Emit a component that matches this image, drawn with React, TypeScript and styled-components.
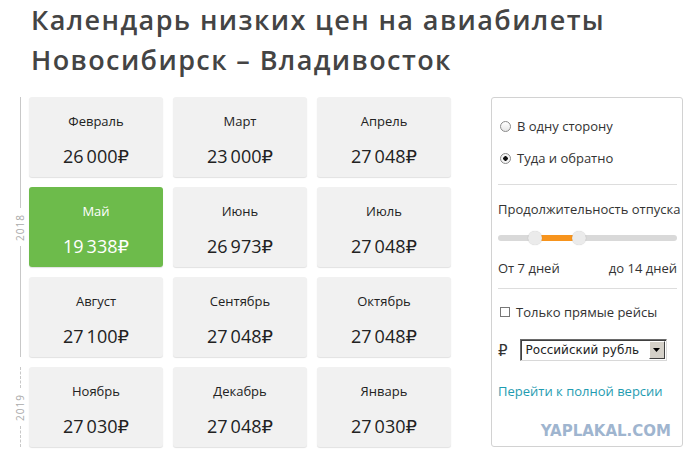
import { FC } from "react";
import styled, { createGlobalStyle } from "styled-components";

type Month = { name: string; price: string; best?: boolean };

const years: { year: string; dashed?: boolean; months: Month[] }[] = [
  {
    year: "2018",
    months: [
      { name: "Февраль", price: "26\u2009000₽" },
      { name: "Март", price: "23\u2009000₽" },
      { name: "Апрель", price: "27\u2009048₽" },
      { name: "Май", price: "19\u2009338₽", best: true },
      { name: "Июнь", price: "26\u2009973₽" },
      { name: "Июль", price: "27\u2009048₽" },
      { name: "Август", price: "27\u2009100₽" },
      { name: "Сентябрь", price: "27\u2009048₽" },
      { name: "Октябрь", price: "27\u2009048₽" },
    ],
  },
  {
    year: "2019",
    dashed: true,
    months: [
      { name: "Ноябрь", price: "27\u2009030₽" },
      { name: "Декабрь", price: "27\u2009048₽" },
      { name: "Январь", price: "27\u2009030₽" },
    ],
  },
];

const App: FC = () => {
  return (
    <Page>
      <GlobalStyle />
      <Title>
        Календарь низких цен на авиабилеты
        <br />
        Новосибирск – Владивосток
      </Title>
      <Main>
        <Calendar>
          {years.map((y) => (
            <YearGroup key={y.year}>
              <Rail>
                <RailLine $dashed={y.dashed} />
                <YearLabel>{y.year}</YearLabel>
                <RailLine $dashed={y.dashed} />
              </Rail>
              <Grid>
                {y.months.map((m) => (
                  <Card key={m.name} $best={m.best}>
                    <MonthName>{m.name}</MonthName>
                    <Price>{m.price}</Price>
                  </Card>
                ))}
              </Grid>
            </YearGroup>
          ))}
        </Calendar>

        <Panel>
          <Options>
            <Option>
              <Radio />
              В одну сторону
            </Option>
            <Option>
              <Radio $checked />
              Туда и обратно
            </Option>
          </Options>
          <Divider />
          <DurationLabel>Продолжительность отпуска</DurationLabel>
          <Slider>
            <Track>
              <Fill style={{ left: 37, width: 44 }} />
              <Thumb style={{ left: 30 }} />
              <Thumb style={{ left: 74 }} />
            </Track>
          </Slider>
          <RangeLabels>
            <span>От 7 дней</span>
            <span>до 14 дней</span>
          </RangeLabels>
          <Divider />
          <CheckRow>
            <Checkbox />
            Только прямые рейсы
          </CheckRow>
          <CurrencyRow>
            <Ruble>₽</Ruble>
            <SelectBox>
              <SelectText>Российский рубль</SelectText>
              <SelectArrow>
                <svg width="7" height="4" viewBox="0 0 7 4">
                  <path d="M0 0h7L3.5 4z" fill="#000" />
                </svg>
              </SelectArrow>
            </SelectBox>
          </CurrencyRow>
          <FullLink href="#">Перейти к полной версии</FullLink>
          <Watermark>YAPLAKAL.COM</Watermark>
        </Panel>
      </Main>
    </Page>
  );
};

export default App;

const GlobalStyle = createGlobalStyle`
  body {
    margin: 0;
    background: #fff;
    font-family: "Open Sans", "DejaVu Sans", sans-serif;
    color: #333;
  }
`;

const Page = styled.div`
  width: 700px;
  height: 460px;
  overflow: hidden;
  padding-left: 14px;
  box-sizing: border-box;
`;

const Title = styled.h1`
  margin: 0 0 17px 17px;
  font-size: 27px;
  font-weight: 600;
  letter-spacing: 1.4px;
  line-height: 40px;
  color: #444;
  white-space: nowrap;
`;

const Main = styled.div`
  display: flex;
  align-items: flex-start;
  gap: 40px;
`;

const Calendar = styled.div`
  display: flex;
  flex-direction: column;
  gap: 10px;
`;

const YearGroup = styled.div`
  display: flex;
  gap: 3px;
`;

const Rail = styled.div`
  width: 12px;
  display: flex;
  flex-direction: column;
  align-items: center;
`;

const RailLine = styled.div<{ $dashed?: boolean }>`
  flex: 1;
  width: 0;
  border-left: 1px ${(p) => (p.$dashed ? "dashed" : "solid")} #c8c8c8;
`;

const YearLabel = styled.div`
  writing-mode: vertical-rl;
  transform: rotate(180deg);
  font-size: 10px;
  letter-spacing: 1px;
  color: #aaa;
  padding: 6px 0;
`;

const Grid = styled.div`
  display: grid;
  grid-template-columns: repeat(3, 134px);
  grid-auto-rows: 80px;
  gap: 10px;
`;

const Card = styled.div<{ $best?: boolean }>`
  display: flex;
  flex-direction: column;
  align-items: center;
  padding-top: 15px;
  box-sizing: border-box;
  border-radius: 3px;
  background: ${(p) => (p.$best ? "#6dbb4b" : "#f1f1f1")};
  color: ${(p) => (p.$best ? "#fff" : "#222")};
  box-shadow: 0 1px 1px rgba(0, 0, 0, 0.12);
`;

const MonthName = styled.div`
  font-size: 13px;
  line-height: 18px;
`;

const Price = styled.div`
  margin-top: 14px;
  font-size: 18px;
  line-height: 24px;
`;

const Panel = styled.div`
  width: 192px;
  height: 350px;
  box-sizing: border-box;
  border: 1px solid #d2d2d2;
  border-radius: 3px;
  padding: 12px 5px 0 6px;
  display: flex;
  flex-direction: column;
  font-size: 13px;
  color: #333;
`;

const Options = styled.div`
  display: flex;
  flex-direction: column;
`;

const Option = styled.label`
  height: 32px;
  display: flex;
  align-items: center;
  gap: 6px;
  padding-left: 2px;
`;

const Radio = styled.span<{ $checked?: boolean }>`
  width: 11px;
  height: 11px;
  border-radius: 50%;
  border: 1px solid #8a8a8a;
  box-sizing: border-box;
  background: ${(p) =>
    p.$checked
      ? "radial-gradient(circle, #111 0 2px, #f4f4f4 2.5px)"
      : "linear-gradient(#fff, #e6e6e6)"};
`;

const Divider = styled.div`
  height: 1px;
  background: #ddd;
  margin-top: 10px;
`;

const DurationLabel = styled.div`
  margin-top: 14px;
  line-height: 20px;
  white-space: nowrap;
`;

const Slider = styled.div`
  margin-top: 12px;
  height: 14px;
  display: flex;
  align-items: center;
`;

const Track = styled.div`
  position: relative;
  flex: 1;
  height: 6px;
  border-radius: 3px;
  background: #d9d9d9;
`;

const Fill = styled.div`
  position: absolute;
  top: 0;
  height: 6px;
  background: #f7941d;
`;

const Thumb = styled.div`
  position: absolute;
  top: -4px;
  width: 14px;
  height: 14px;
  border-radius: 50%;
  background: #ebebeb;
  box-shadow: 0 0 1px rgba(0, 0, 0, 0.25);
`;

const RangeLabels = styled.div`
  margin-top: 13px;
  line-height: 20px;
  display: flex;
  justify-content: space-between;
`;

const CheckRow = styled.label`
  margin-top: 13px;
  height: 20px;
  display: flex;
  align-items: center;
  gap: 6px;
  padding-left: 2px;
`;

const Checkbox = styled.span`
  width: 10px;
  height: 10px;
  box-sizing: border-box;
  border: 1px solid #777;
  background: #fff;
`;

const CurrencyRow = styled.div`
  margin-top: 17px;
  display: flex;
  align-items: center;
  gap: 12px;
`;

const Ruble = styled.span`
  font-size: 15px;
  color: #333;
`;

const SelectBox = styled.div`
  width: 147px;
  height: 22px;
  box-sizing: border-box;
  display: flex;
  align-items: center;
  border: 1px solid;
  border-color: #6a6a6a #d8d8d8 #d8d8d8 #6a6a6a;
  box-shadow: inset 1px 1px 0 #404040;
  background: #fff;
`;

const SelectText = styled.span`
  flex: 1;
  padding-left: 5px;
  font-family: "DejaVu Sans", sans-serif;
  font-size: 12px;
  color: #222;
`;

const SelectArrow = styled.span`
  width: 16px;
  height: 18px;
  margin-right: 1px;
  display: flex;
  align-items: center;
  justify-content: center;
  background: #d4d0c8;
  border: 1px solid;
  border-color: #fff #404040 #404040 #fff;
  box-sizing: border-box;
`;

const FullLink = styled.a`
  margin-top: 20px;
  line-height: 20px;
  color: #1f9cb1;
  text-decoration: none;
`;

const Watermark = styled.div`
  margin-top: 20px;
  align-self: flex-end;
  margin-right: 6px;
  font-family: "DejaVu Sans", sans-serif;
  font-weight: 700;
  font-size: 15px;
  line-height: 20px;
  color: #9fb5cf;
`;
